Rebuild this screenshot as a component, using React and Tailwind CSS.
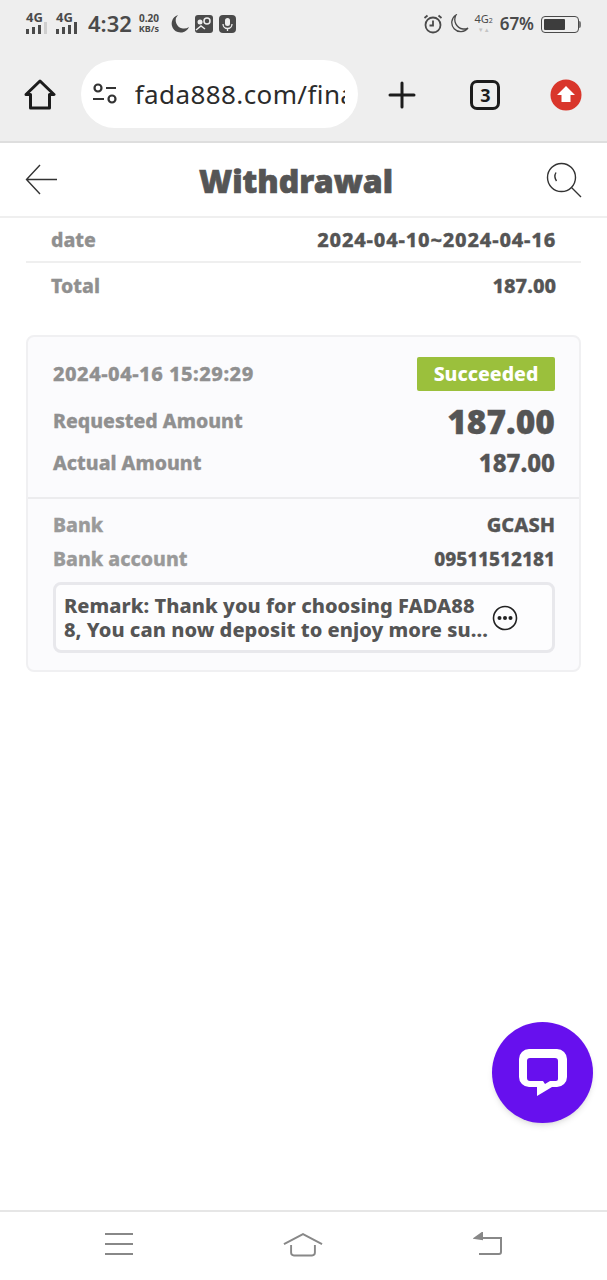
import React from 'react';

const font = { fontFamily: '"Noto Sans", "Open Sans", sans-serif' };

const Bars = ({ faded }) => (
    <svg width="24" height="12" viewBox="0 0 24 12" fill="#4a4a4a">
        <rect x="0" y="7" width="3" height="5" />
        <rect x="6" y="5" width="3" height="7" />
        <rect x="12" y="3" width="3" height="9" />
        <rect x="18" y="0" width="3" height="12" fill={faded ? '#cfcfcf' : '#4a4a4a'} />
    </svg>
);

const Signal = ({ faded }) => (
    <div className="flex flex-col items-start w-[24px]">
        <span className="text-[13px] leading-[10px] font-bold text-[#4a4a4a]">4G</span>
        <Bars faded={faded} />
    </div>
);

const StatusBar = () => (
    <div className="h-[48px] pt-[11px] pl-[26px] pr-[26px] flex justify-between items-start text-[#4a4a4a]">
        <div className="flex items-center">
            <div className="flex gap-[6px] -mt-[1px]">
                <Signal faded />
                <Signal />
            </div>
            <span className="ml-[8px] -mt-[1px] text-[22px] leading-[26px] font-semibold">4:32</span>
            <div className="ml-[7px] flex flex-col items-center font-bold">
                <span className="text-[10px] leading-[11px]">0.20</span>
                <span className="text-[9px] leading-[10px]">KB/s</span>
            </div>
            <svg className="ml-[11px]" width="20" height="20" viewBox="0 0 20 20" fill="#4a4a4a">
                <path d="M8 1a9 9 0 1 0 11 12 9 9 0 0 1-6 1.500A8 8 0 0 1 8 1z" />
            </svg>
            <svg className="ml-[5px]" width="18" height="18" viewBox="0 0 18 18">
                <rect width="18" height="18" rx="3" fill="#4a4a4a" />
                <circle cx="12" cy="6" r="3" fill="none" stroke="#eee" strokeWidth="1.500" />
                <circle cx="5" cy="7" r="2.500" fill="#eee" />
                <path d="M1 15l5-4 4 3" stroke="#eee" strokeWidth="1.500" fill="none" />
            </svg>
            <svg className="ml-[6px]" width="17" height="18" viewBox="0 0 17 18">
                <rect width="17" height="18" rx="4" fill="#4a4a4a" />
                <rect x="6" y="3" width="5" height="8" rx="2.500" fill="#eee" />
                <path d="M4 9a4.500 4.500 0 0 0 9 0M8.500 13.500V16" stroke="#eee" strokeWidth="1.300" fill="none" />
            </svg>
        </div>
        <div className="flex items-center">
            <svg width="20" height="20" viewBox="0 0 20 20" fill="none" stroke="#4a4a4a" strokeWidth="1.800">
                <circle cx="10" cy="11" r="7.500" />
                <path d="M10 6.500V11.500H6.500M1.500 4L4.500 1.500M18.500 4L15.500 1.500" />
            </svg>
            <svg className="ml-[6px]" width="20" height="20" viewBox="0 0 20 20" fill="none" stroke="#4a4a4a" strokeWidth="1.300">
                <path d="M7 1a9 9 0 1 0 12 13 10 10 0 0 1-5 1A9.500 9.500 0 0 1 7 1z" />
            </svg>
            <div className="ml-[4px] -mt-[3px] flex flex-col items-center w-[22px]">
                <span className="text-[11px] leading-[12px] text-[#4a4a4a] whitespace-nowrap">4G<span className="text-[7px]">2</span></span>
                <span className="text-[6px] leading-[6px] text-[#c4c4c4]">▼▲</span>
            </div>
            <span className="ml-[5px] text-[17px] leading-[26px] font-semibold">67%</span>
            <div className="ml-[7px] flex items-center">
                <div className="w-[38px] h-[17px] rounded-[4px] border border-[#4a4a4a] p-[2px]">
                    <div className="h-full w-[67%] rounded-[1px] bg-[#3d3d3d]"></div>
                </div>
                <div className="w-[2px] h-[7px] bg-[#777] rounded-r-sm"></div>
            </div>
        </div>
    </div>
);

const Toolbar = () => (
    <div className="h-[95px] pt-[12px] flex items-start border-b-2 border-[#dedede]">
        <div className="w-[81px] h-[70px] flex items-center justify-center">
            <svg width="32" height="32" viewBox="0 0 32 32" fill="none" stroke="#1c1c1c" strokeWidth="3" strokeLinejoin="round" strokeLinecap="round">
                <path d="M2 15.500L16 2l14 13.500h-4.500V29h-19V15.500z" />
            </svg>
        </div>
        <div className="w-[277px] h-[68px] rounded-[34px] bg-white flex items-center pl-[11px] pr-[13px]">
            <svg className="shrink-0" width="26" height="22" viewBox="0 0 26 22" fill="none" stroke="#333" strokeWidth="2.200">
                <circle cx="6" cy="5" r="3.500" />
                <path d="M14 5h10M1 16h11" />
                <circle cx="20" cy="16" r="3.500" />
            </svg>
            <div className="ml-[17px] flex-1 overflow-hidden">
                <span className="block text-[26px] leading-[30px] tracking-[0.4px] text-[#2b2b2b] whitespace-nowrap">fada888.com/fina</span>
            </div>
        </div>
        <div className="w-[88px] h-[70px] flex items-center justify-center">
            <svg width="28" height="28" viewBox="0 0 28 28" stroke="#1c1c1c" strokeWidth="3" strokeLinecap="round">
                <path d="M14 2V26M2 14H26" />
            </svg>
        </div>
        <div className="w-[80px] h-[70px] flex items-center justify-center">
            <div className="w-[30px] h-[30px] rounded-[7px] border-[3px] border-[#1c1c1c] flex items-center justify-center text-[18px] font-bold text-[#1c1c1c]">3</div>
        </div>
        <div className="w-[82px] h-[70px] flex items-center justify-center">
            <svg width="32" height="32" viewBox="0 0 32 32">
                <circle cx="16" cy="16" r="15.500" fill="#d9362b" />
                <path d="M16 7L25 16h-4.500v7h-9v-7H7z" fill="#fff" />
            </svg>
        </div>
    </div>
);

const Header = () => (
    <div className="h-[75px] bg-white border-b-2 border-[#efefef] flex items-center justify-between pl-[25px] pr-[25px]">
        <svg width="33" height="32" viewBox="0 0 33 32" fill="none" stroke="#333" strokeWidth="1.400">
            <path d="M32 15.500H2M15 1L1.500 15.500 15 30" />
        </svg>
        <h1 className="text-[32px] leading-[40px] mt-[2px] font-black text-[#555] -ml-[12px] [-webkit-text-stroke:0.7px_#555]">Withdrawal</h1>
        <svg width="36" height="36" viewBox="0 0 36 36" fill="none" stroke="#333" strokeWidth="1.400">
            <circle cx="15.500" cy="15.500" r="14" />
            <path d="M25.500 25.500L35 35M10 10.500C8.500 13 8.500 16 10.500 19" />
        </svg>
    </div>
);

const Row = ({ label, value, labelClass = '', valueClass = '' }) => (
    <div className={`flex items-center justify-between font-extrabold text-[19.5px] [-webkit-text-stroke:0.3px_currentColor] ${labelClass}`}>
        <span>{label}</span>
        <span className={valueClass}>{value}</span>
    </div>
);

const App = () => {
    return (
        <div className="relative h-[1280px] w-[607px] bg-white flex flex-col overflow-hidden" style={font}>
            <div className="bg-[#eeeeee]">
                <StatusBar />
                <Toolbar />
            </div>
            <Header />

            {/* Summary */}
            <div className="mx-[26px]">
                <div className="h-[45px] px-[25px] flex items-center border-b-2 border-[#efefef]">
                    <div className="w-full">
                        <Row label="date" value="2024-04-10~2024-04-16" labelClass="text-[#909090]" valueClass="text-[20px] tracking-[0.8px] text-[#555]" />
                    </div>
                </div>
                <div className="h-[46px] px-[25px] flex items-center">
                    <div className="w-full">
                        <Row label="Total" value="187.00" labelClass="text-[#909090]" valueClass="text-[20px] text-[#555]" />
                    </div>
                </div>
            </div>

            {/* Record card */}
            <div className="mx-[26px] mt-[26px] h-[337px] rounded-[8px] border-2 border-[#f0f0f2] bg-[#fbfbfd]">
                <div className="h-[162px] border-b-2 border-[#ececee] pl-[25px] pr-[24px] pt-[20px]">
                    <div className="flex items-center justify-between h-[34px]">
                        <span className="text-[20px] tracking-[0.5px] font-extrabold text-[#909090] [-webkit-text-stroke:0.3px_#909090]">2024-04-16 15:29:29</span>
                        <span className="w-[138px] h-[34px] rounded-[2px] bg-[#9bc03c] flex items-center justify-center text-[19.5px] font-extrabold text-white">Succeeded</span>
                    </div>
                    <Row label="Requested Amount" value="187.00" labelClass="mt-[10px] h-[40px] text-[#909090]" valueClass="text-[33.500px] font-black text-[#555]" />
                    <Row label="Actual Amount" value="187.00" labelClass="mt-[4px] h-[36px] text-[#909090]" valueClass="text-[24px] text-[#555]" />
                </div>
                <div className="pl-[25px] pr-[24px] pt-[10px]">
                    <Row label="Bank" value="GCASH" labelClass="h-[32px] text-[#9a9a9a]" valueClass="text-[20px] text-[#555]" />
                    <Row label="Bank account" value="09511512181" labelClass="mt-[2px] h-[32px] text-[#9a9a9a]" valueClass="text-[19px] text-[#555]" />
                    <div className="mt-[7px] h-[71px] rounded-[8px] border-[3px] border-[#e8e8ec] bg-[#fdfdfe] pl-[8px] flex items-center">
                        <p className="w-[425px] text-[20px] leading-[24px] tracking-[0.05px] font-extrabold text-[#555] whitespace-nowrap">
                            Remark: Thank you for choosing FADA88<br />8, You can now deposit to enjoy more su...
                        </p>
                        <svg className="ml-[3px] shrink-0" width="26" height="26" viewBox="0 0 26 26" fill="none">
                            <circle cx="13" cy="13" r="11.500" stroke="#222" strokeWidth="1.600" />
                            <circle cx="7.500" cy="13" r="2" fill="#222" />
                            <circle cx="13" cy="13" r="2" fill="#222" />
                            <circle cx="18.500" cy="13" r="2" fill="#222" />
                        </svg>
                    </div>
                </div>
            </div>

            {/* Chat bubble */}
            <div className="absolute left-[492px] top-[1022px] w-[101px] h-[101px] rounded-full bg-[#6710ee] flex items-center justify-center shadow-md">
                <svg className="mt-[1px]" width="48" height="48" viewBox="0 0 48 48" fill="none">
                    <path fillRule="evenodd" d="M10 0h28a10 10 0 0 1 10 10v18a10 10 0 0 1-10 10h-5L18 47v-9h-8A10 10 0 0 1 0 28V10A10 10 0 0 1 10 0zM11 9a3 3 0 0 0-3 3v17a3 3 0 0 0 3 3h13l2 3 5-3h6a2 2 0 0 0 2-2V12a3 3 0 0 0-3-3z" fill="#fff" />
                </svg>
            </div>

            {/* Nav bar */}
            <div className="mt-auto h-[70px] border-t-2 border-[#e6e6e6] bg-white flex items-start pt-[20px] pl-[104px] pr-[104px] justify-between">
                <svg width="30" height="24" viewBox="0 0 30 24" stroke="#888" strokeWidth="2">
                    <path d="M1 2H29M1 12H29M1 22H29" />
                </svg>
                <svg className="-ml-[1px]" width="40" height="26" viewBox="0 0 42 26" fill="none" stroke="#888" strokeWidth="2">
                    <path d="M1 12L21 1.500 41 12M8.500 13V21a3 3 0 0 0 3 3h19a3 3 0 0 0 3-3V13" />
                </svg>
                <svg width="30" height="24" viewBox="0 0 30 24" fill="none" stroke="#888" strokeWidth="2">
                    <path d="M6 22H26a2 2 0 0 0 2-2V6H2" />
                    <path d="M9 1L2 6l7 1z" fill="#888" />
                </svg>
            </div>
        </div>
    );
};

export default App;
